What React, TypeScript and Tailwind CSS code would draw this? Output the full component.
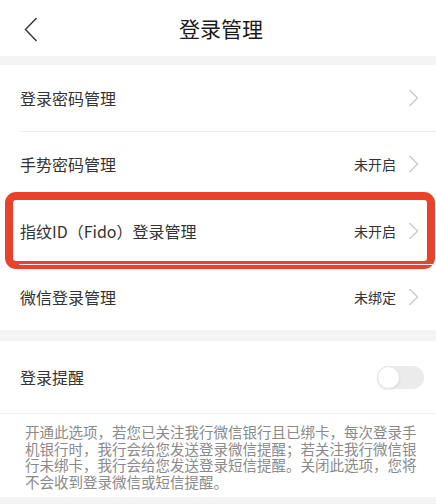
import React from "react";

const font = { fontFamily: '"Noto Sans CJK SC", "Noto Sans", sans-serif' };

function Chevron() {
  return (
    <svg width="11" height="18" viewBox="0 0 11 18" className="shrink-0">
      <polyline points="1.5,1 9.5,9 1.5,17" fill="none" stroke="#c9c9c9" strokeWidth="1.3" />
    </svg>
  );
}

function Row({ label, status, divider, highlight }: { label: string; status?: string; divider?: boolean; highlight?: boolean }) {
  return (
    <div className="relative h-[66.25px] flex items-center pl-[20px] pr-[17px]">
      {divider && <div className="absolute top-0 left-[19px] right-0 h-px bg-[#ececec]" />}
      <span className="text-[16px] text-[#333] flex-1 leading-none">{label}</span>
      {status && <span className="text-[14px] text-[#333] mr-[12px] leading-none">{status}</span>}
      <Chevron />
      {highlight && (
        <div className="absolute left-[5px] right-px top-[-6px] bottom-[-5px] border-[8px] border-[#e8432a] rounded-[11px]" />
      )}
    </div>
  );
}

export default function App() {
  const lines = [
    "开通此选项，若您已关注我行微信银行且已绑卡，每次登录手",
    "机银行时，我行会给您发送登录微信提醒；若关注我行微信银",
    "行未绑卡，我行会给您发送登录短信提醒。关闭此选项，您将",
    "不会收到登录微信或短信提醒。",
  ];
  return (
    <div className="w-[436px] h-[504px] bg-white overflow-hidden flex flex-col" style={font}>
      <div className="relative h-[56px] flex items-center justify-center pl-[6px] shrink-0">
        <svg width="14" height="25" viewBox="0 0 14 25" className="absolute left-[24px] top-[17px]">
          <polyline points="12.5,1 1.5,12.5 12.5,24" fill="none" stroke="#333" strokeWidth="1.4" />
        </svg>
        <span className="text-[21px] text-[#1a1a1a] leading-none">登录管理</span>
      </div>
      <div className="h-[9px] bg-[#f4f4f4] shrink-0" />
      <Row label="登录密码管理" />
      <Row label="手势密码管理" status="未开启" divider />
      <Row label="指纹ID（Fido）登录管理" status="未开启" divider highlight />
      <Row label="微信登录管理" status="未绑定" divider />
      <div className="h-[11px] bg-[#f4f4f4] shrink-0" />
      <div className="h-[72px] flex items-center pl-[20px] pr-[12px] shrink-0">
        <span className="text-[16px] text-[#333] flex-1 leading-none">登录提醒</span>
        <div className="relative w-[47px] h-[23px] rounded-full bg-[#ebebeb]">
          <div className="absolute left-0 top-0 w-[23px] h-[23px] rounded-full bg-white border border-[#e4e4e4] shadow-[0_1px_2px_rgba(0,0,0,0.08)]" />
        </div>
      </div>
      <div className="h-px bg-[#efefef] shrink-0" />
      <div className="flex-1 pl-[25px] pt-[10px] text-[14.5px] leading-[16.7px] text-[#8a8a8a]">
        {lines.map((l) => (
          <div key={l} className="whitespace-nowrap">{l}</div>
        ))}
      </div>
      <div className="h-[7px] bg-[#f4f4f4] shrink-0" />
    </div>
  );
}
